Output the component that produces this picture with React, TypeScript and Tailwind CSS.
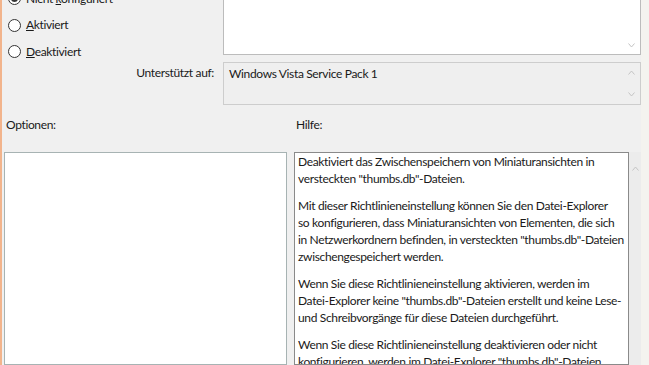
const font = { fontFamily: '"Segoe UI", Lato, "Liberation Sans", sans-serif' };

const Chevron = ({ up }: { up?: boolean }) => (
    <svg width="7" height="5" viewBox="0 0 7 5" className="block">
        <path d={up ? 'M0.5 4.5 L3.5 1 L6.5 4.5' : 'M0.5 0.5 L3.5 4 L6.5 0.5'} fill="none" stroke="#c4c4c4" strokeWidth="1" />
    </svg>
);

const Radio = ({ label, hotkey, rest, checked }: { label?: string; hotkey: string; rest: string; checked?: boolean }) => (
    <div className="flex items-center gap-[5px] h-[26.5px] shrink-0">
        <span className="w-[13px] h-[13px] rounded-full border border-[#333] bg-white flex items-center justify-center">
            {checked && <span className="w-[7px] h-[7px] rounded-full bg-[#333]" />}
        </span>
        <span className="text-[#1a1a1a]">
            {label}
            <span className="underline">{hotkey}</span>
            {rest}
        </span>
    </div>
);

const helpParagraphs = [
    ['Deaktiviert das Zwischenspeichern von Miniaturansichten in', 'versteckten "thumbs.db"-Dateien.'],
    [
        'Mit dieser Richtlinieneinstellung können Sie den Datei-Explorer',
        'so konfigurieren, dass Miniaturansichten von Elementen, die sich',
        'in Netzwerkordnern befinden, in versteckten "thumbs.db"-Dateien',
        'zwischengespeichert werden.',
    ],
    [
        'Wenn Sie diese Richtlinieneinstellung aktivieren, werden im',
        'Datei-Explorer keine "thumbs.db"-Dateien erstellt und keine Lese-',
        'und Schreibvorgänge für diese Dateien durchgeführt.',
    ],
    [
        'Wenn Sie diese Richtlinieneinstellung deaktivieren oder nicht',
        'konfigurieren, werden im Datei-Explorer "thumbs.db"-Dateien',
        'erstellt und verwendet.',
    ],
];

export default function App() {
    return (
        <div
            className="w-[649px] h-[365px] overflow-hidden bg-[#f0f0f0] border-l-2 border-[#f2b48c] text-[#1a1a1a] text-[12px] tracking-[-0.35px]"
            style={font}
        >
            <div className="h-full flex">
                <div className="w-[639px] flex flex-col">
                    {/* Top: state radios + comment box */}
                    <div className="flex h-[69px] shrink-0 -mt-[14px]">
                        <div className="w-[221px] pl-[6px] -mt-[0.5px] flex flex-col">
                            <Radio label="Nicht " hotkey="k" rest="onfiguriert" checked />
                            <Radio hotkey="A" rest="ktiviert" />
                            <Radio hotkey="D" rest="eaktiviert" />
                        </div>
                        <div className="flex-1 bg-white border border-[#bcbcbc] flex justify-end items-end pr-[5px] pb-[6px]">
                            <Chevron />
                        </div>
                    </div>

                    {/* Supported on */}
                    <div className="flex mt-[7px] h-[43px] shrink-0">
                        <div className="w-[221px] pr-[9px] pt-[2px] text-right">Unterstützt auf:</div>
                        <div className="flex-1 border border-[#cdcdcd] bg-[#efefef] flex justify-between pl-[5px] pr-[5px]">
                            <span className="pt-[2px]">Windows Vista Service Pack 1</span>
                            <div className="flex flex-col justify-between py-[7px]">
                                <Chevron up />
                                <Chevron />
                            </div>
                        </div>
                    </div>

                    {/* Section labels */}
                    <div className="flex mt-[10px] h-[20px] shrink-0 items-center">
                        <div className="w-[290px] pl-[4px]">Optionen:</div>
                        <div className="pl-[4px]">Hilfe:</div>
                    </div>

                    {/* Panels */}
                    <div className="flex mt-[17px] flex-1 min-h-0">
                        <div className="ml-[2px] w-[283px] bg-white border border-[#a7b3b3]" />
                        <div className="ml-[7px] w-[335px] bg-white border border-[#8a8a8a] pl-[3px] leading-[17.2px] whitespace-nowrap overflow-hidden">
                            {helpParagraphs.map((p, i) => (
                                <div key={i} className="mb-[9.3px]">
                                    {p.map((l) => (
                                        <div key={l}>{l}</div>
                                    ))}
                                </div>
                            ))}
                        </div>
                        <div className="w-[12px] pt-[14px] flex justify-center bg-[#ececec]">
                            <Chevron up />
                        </div>
                    </div>
                </div>
                <div className="flex-1 bg-[#f4f3ef]" />
            </div>
        </div>
    );
}
